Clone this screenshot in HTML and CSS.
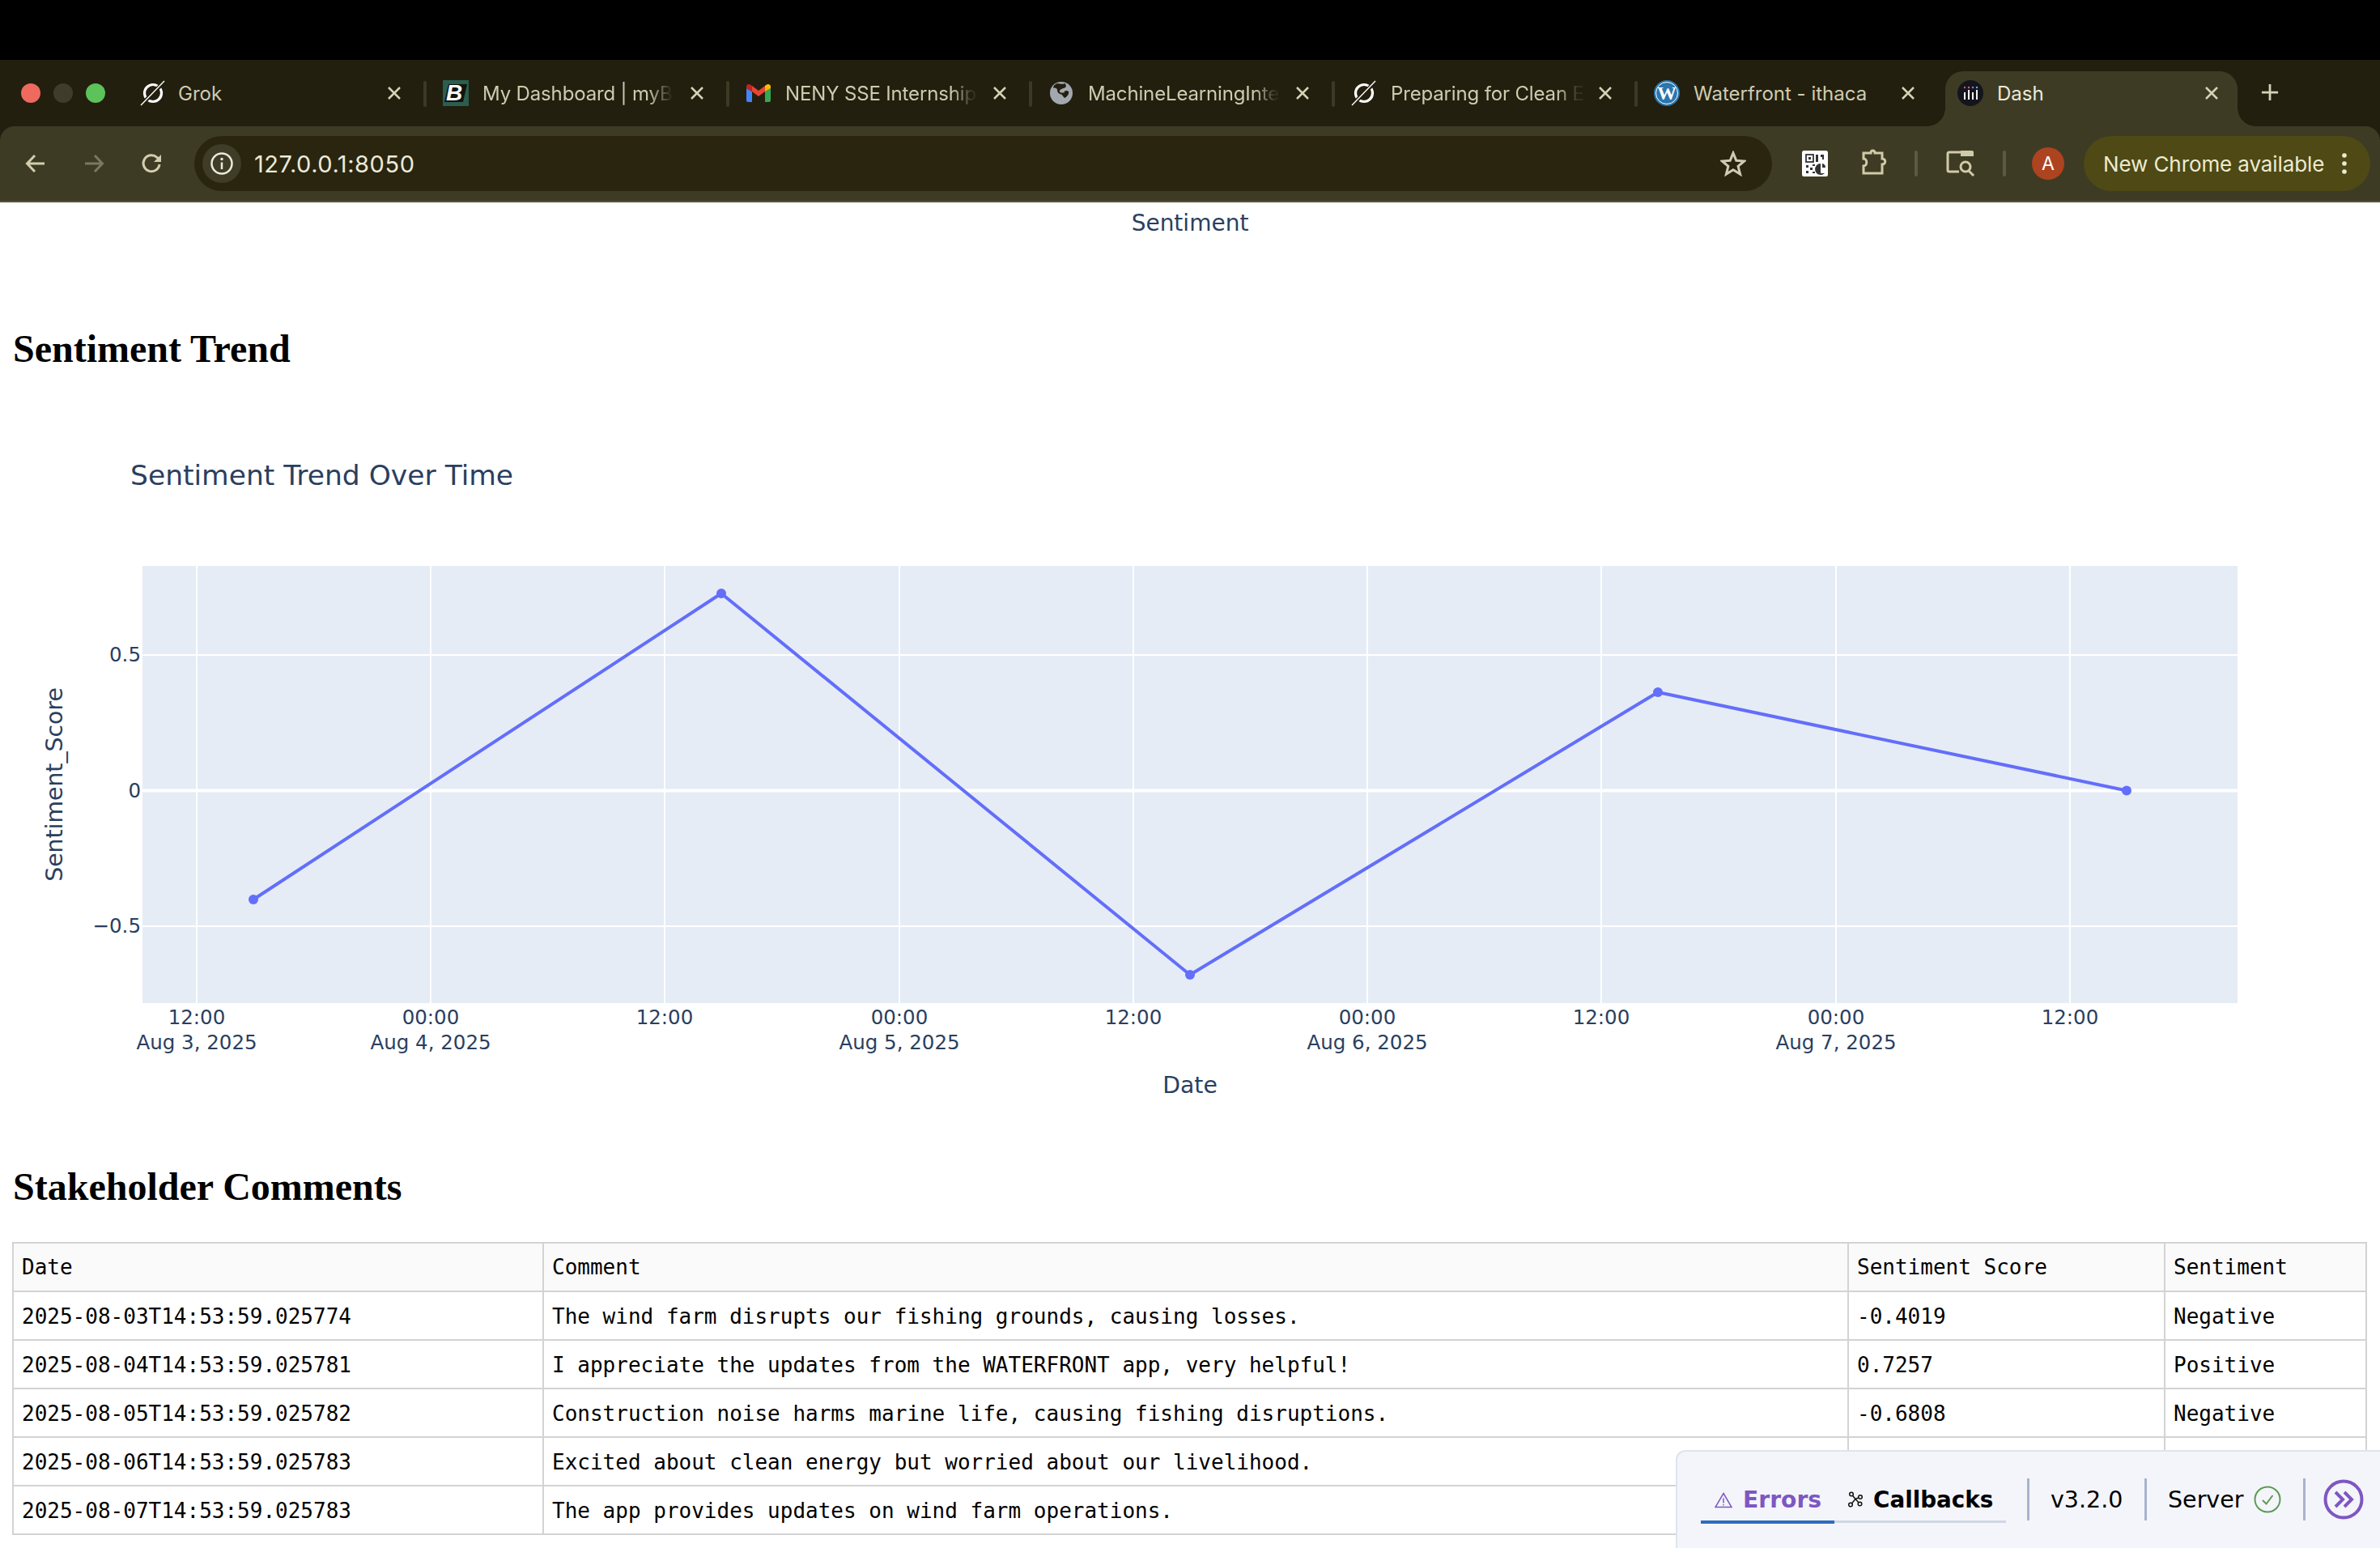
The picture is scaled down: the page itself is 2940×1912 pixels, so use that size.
FILE: index.html
```html
<!DOCTYPE html>
<html lang="en">
<head>
<meta charset="utf-8">
<title>Dash</title>
<link rel="stylesheet" href="styles.css">
</head>
<body>
<header class="chrome">
  <div class="menubar"></div>
  <div class="tabstrip">
    <div class="lights"><span class="light red"></span><span class="light grey"></span><span class="light green"></span></div>
    <div class="tab first-tab">
      <svg class="favicon" viewBox="0 0 32 32"><circle cx="16" cy="16" r="10.500" fill="none" stroke="#fff" stroke-width="3.200"/><path d="M1 31L31 1" stroke="#221f0f" stroke-width="5"/><path d="M1 31L30 1" stroke="#fff" stroke-width="1.400"/></svg>
      <span class="tab-title">Grok</span>
      <svg class="tab-close" viewBox="0 0 32 32"><path d="M9 9L23 23M23 9L9 23"/></svg>
    </div>
    <span class="tab-sep"></span>
    <div class="tab">
      <svg class="favicon" viewBox="0 0 32 32"><rect width="32" height="32" fill="#2b5e4e"/><path d="M7 5H30L25 27H2z" fill="#10140f"/><text class="fav-b" x="14" y="25" text-anchor="middle">B</text></svg>
      <span class="tab-title fade">My Dashboard | myB</span>
      <svg class="tab-close" viewBox="0 0 32 32"><path d="M9 9L23 23M23 9L9 23"/></svg>
    </div>
    <span class="tab-sep"></span>
    <div class="tab">
      <svg class="favicon" viewBox="-1 -5 32 32"><path d="M0 5V20a2 2 0 0 0 2 2H7V9z" fill="#4285f4"/><path d="M23 9V22h5a2 2 0 0 0 2-2V5z" fill="#34a853"/><path d="M7 9l8 6 8-6V2l-8 6-8-6z" fill="#ea4335"/><path d="M23 2V9l7-4V3C30 0 26.500-.5 25 .6z" fill="#fbbc04"/><path d="M0 5l7 4V2L5 .6C3.500-.5 0 0 0 3z" fill="#c5221f"/></svg>
      <span class="tab-title fade">NENY SSE Internship</span>
      <svg class="tab-close" viewBox="0 0 32 32"><path d="M9 9L23 23M23 9L9 23"/></svg>
    </div>
    <span class="tab-sep"></span>
    <div class="tab">
      <svg class="favicon" viewBox="0 0 32 32"><circle cx="16" cy="16" r="14" fill="#a3a8ae"/><path d="M11 4c4 1 8 1 10 0l1 4c-3 3-7 2-8 5s4 3 6 2c-1-2 3-3 5-1 1 3-2 7-5 8-2-2-3-5-6-5-2-1-3-3-3-5s-3-3-5-2c0-3 2-5 5-6z" fill="#221f0f"/></svg>
      <span class="tab-title fade">MachineLearningInte</span>
      <svg class="tab-close" viewBox="0 0 32 32"><path d="M9 9L23 23M23 9L9 23"/></svg>
    </div>
    <span class="tab-sep"></span>
    <div class="tab">
      <svg class="favicon" viewBox="0 0 32 32"><circle cx="16" cy="16" r="10.500" fill="none" stroke="#fff" stroke-width="3.200"/><path d="M1 31L31 1" stroke="#221f0f" stroke-width="5"/><path d="M1 31L30 1" stroke="#fff" stroke-width="1.400"/></svg>
      <span class="tab-title fade">Preparing for Clean E</span>
      <svg class="tab-close" viewBox="0 0 32 32"><path d="M9 9L23 23M23 9L9 23"/></svg>
    </div>
    <span class="tab-sep"></span>
    <div class="tab">
      <svg class="favicon" viewBox="0 0 32 32"><circle cx="16" cy="16" r="16" fill="#2a76ad"/><circle cx="16" cy="16" r="13.500" fill="none" stroke="#fff" stroke-width="1"/><text class="fav-w" x="16" y="24" text-anchor="middle">W</text></svg>
      <span class="tab-title">Waterfront - ithaca</span>
      <svg class="tab-close" viewBox="0 0 32 32"><path d="M9 9L23 23M23 9L9 23"/></svg>
    </div>
    <div class="tab active">
      <svg class="favicon" viewBox="0 0 32 32"><circle cx="16" cy="16" r="16" fill="#14151c"/><g fill="#f1f1f1"><rect x="8" y="15" width="2" height="9"/><rect x="13" y="12" width="2" height="12"/><rect x="18" y="15" width="2" height="9"/><rect x="23" y="12" width="2" height="12"/></g><g><circle cx="9" cy="9" r="1.200" fill="#e0447c"/><circle cx="14" cy="9" r="1.200" fill="#d45a9b"/><circle cx="19" cy="9" r="1.200" fill="#8f7fc9"/><circle cx="24" cy="9" r="1.200" fill="#5db8d8"/></g></svg>
      <span class="tab-title">Dash</span>
      <svg class="tab-close" viewBox="0 0 32 32"><path d="M9 9L23 23M23 9L9 23"/></svg>
    </div>
    <svg class="new-tab" viewBox="0 0 24 24"><path d="M12 1V23M1 12H23"/></svg>
  </div>
  <div class="toolbar">
    <button class="nav-btn"><svg viewBox="0 0 24 24" class="tool-icon"><path d="M23 12H2M11 2L1.500 12 11 22"/></svg></button>
    <button class="nav-btn dim"><svg viewBox="0 0 24 24" class="tool-icon"><path d="M1 12H22M13 2l9.500 10L13 22"/></svg></button>
    <button class="nav-btn"><svg viewBox="0 0 24 24" class="tool-icon"><path d="M21 13a10 10 0 1 1-3-8.500L21 7"/><path class="solid" d="M23 1v9H14z"/></svg></button>
    <div class="omnibox">
      <span class="site-info"><svg viewBox="0 0 28 28"><circle cx="14" cy="14" r="12.500" fill="none" stroke="#ece9dc" stroke-width="2.500"/><path d="M14 12.500V21" stroke="#ece9dc" stroke-width="2.500"/><circle cx="14" cy="8.500" r="1.700" fill="#ece9dc"/></svg></span>
      <span class="url">127.0.0.1:8050</span>
      <svg class="star" viewBox="0 0 32 32"><path d="M16 3l3.800 9.300 10 .7-7.700 6.400 2.500 9.700L16 23.800l-8.600 5.300 2.500-9.700L2.200 13l10-.7z"/></svg>
    </div>
    <svg class="qr" viewBox="0 0 32 32"><rect width="32" height="32" rx="2.500" fill="#fff"/><g fill="none" stroke="#333" stroke-width="1.800"><rect x="5" y="5" width="9" height="9"/></g><rect x="8" y="8" width="3" height="3" fill="#333"/><g fill="#333"><rect x="17" y="5" width="3" height="9"/><rect x="23" y="5" width="4" height="3"/><rect x="25" y="8" width="2" height="3"/><rect x="5" y="18" width="3" height="3"/><rect x="10" y="21" width="3" height="3"/><rect x="5" y="25" width="3" height="3"/><rect x="13" y="26" width="3" height="2"/><rect x="13" y="17" width="3" height="2"/></g><path d="M23 16a7 7 0 1 0 5 12h-5z" fill="#333"/><path d="M25 16a5 5 0 0 1 4 5h-4z" fill="#333"/></svg>
    <svg class="puzzle" viewBox="0 0 32 32"><path d="M3 5H12C12 1 17 1 17 5H26V12C31 12 31 19 26 19V30H3V21C8 21 8 12 3 12z"/></svg>
    <span class="tool-sep"></span>
    <svg class="side-search" viewBox="0 0 36 32"><path d="M16 26H4a2 2 0 0 1-2-2V4a2 2 0 0 1 2-2H20" fill="none" stroke="#cfcaa8" stroke-width="3"/><path d="M18 0H32a2 2 0 0 1 2 2V7H18z" fill="#cfcaa8"/><circle cx="24" cy="20" r="6" fill="none" stroke="#cfcaa8" stroke-width="3"/><path d="M28 25l6 6" stroke="#cfcaa8" stroke-width="3"/></svg>
    <span class="tool-sep second"></span>
    <span class="avatar">A</span>
    <div class="update-chip">
      <span>New Chrome available</span>
      <svg class="kebab" viewBox="0 0 8 28"><circle cx="4" cy="4" r="2.800"/><circle cx="4" cy="14" r="2.800"/><circle cx="4" cy="24" r="2.800"/></svg>
    </div>
  </div>
</header>

<main class="page">
  <div class="pie-title">Sentiment</div>
  <h2 class="section-title first">Sentiment Trend</h2>
  <svg class="trend-chart" viewBox="16 459 2908 941">
    <text class="chart-title" x="161" y="599">Sentiment Trend Over Time</text>
    <rect class="plot-bg" x="176" y="699" width="2588" height="540"/>
    <g class="grid">
      <path d="M243 699V1239M532 699V1239M821 699V1239M1111 699V1239M1400 699V1239M1689 699V1239M1978 699V1239M2268 699V1239M2557 699V1239"/>
      <path d="M176 809H2764M176 1144H2764"/>
    </g>
    <path class="zero" d="M176 976.500H2764"/>
    <path class="series" d="M313 1111L891 733L1470 1204L2048 855L2627 976.500"/>
    <g class="markers">
      <circle cx="313" cy="1111" r="6"/><circle cx="891" cy="733" r="6"/><circle cx="1470" cy="1204" r="6"/><circle cx="2048" cy="855" r="6"/><circle cx="2627" cy="976.500" r="6"/>
    </g>
    <g class="ytick">
      <text x="174" y="817">0.5</text><text x="174" y="985">0</text><text x="174" y="1152">−0.5</text>
    </g>
    <g class="xtick">
      <text x="243" y="1265">12:00</text><text x="243" y="1296">Aug 3, 2025</text>
      <text x="532" y="1265">00:00</text><text x="532" y="1296">Aug 4, 2025</text>
      <text x="821" y="1265">12:00</text>
      <text x="1111" y="1265">00:00</text><text x="1111" y="1296">Aug 5, 2025</text>
      <text x="1400" y="1265">12:00</text>
      <text x="1689" y="1265">00:00</text><text x="1689" y="1296">Aug 6, 2025</text>
      <text x="1978" y="1265">12:00</text>
      <text x="2268" y="1265">00:00</text><text x="2268" y="1296">Aug 7, 2025</text>
      <text x="2557" y="1265">12:00</text>
    </g>
    <text class="axis-title" x="1470" y="1350">Date</text>
    <text class="axis-title" transform="translate(77 969) rotate(-90)">Sentiment_Score</text>
  </svg>
  <h2 class="section-title">Stakeholder Comments</h2>
  <table class="comments">
    <colgroup><col class="c-date"><col class="c-comment"><col class="c-score"><col class="c-sent"></colgroup>
    <thead><tr><th>Date</th><th>Comment</th><th>Sentiment Score</th><th>Sentiment</th></tr></thead>
    <tbody>
      <tr><td>2025-08-03T14:53:59.025774</td><td>The wind farm disrupts our fishing grounds, causing losses.</td><td>-0.4019</td><td>Negative</td></tr>
      <tr><td>2025-08-04T14:53:59.025781</td><td>I appreciate the updates from the WATERFRONT app, very helpful!</td><td>0.7257</td><td>Positive</td></tr>
      <tr><td>2025-08-05T14:53:59.025782</td><td>Construction noise harms marine life, causing fishing disruptions.</td><td>-0.6808</td><td>Negative</td></tr>
      <tr><td>2025-08-06T14:53:59.025783</td><td>Excited about clean energy but worried about our livelihood.</td><td></td><td></td></tr>
      <tr><td>2025-08-07T14:53:59.025783</td><td>The app provides updates on wind farm operations.</td><td></td><td></td></tr>
    </tbody>
  </table>
</main>

<aside class="devtools">
  <div class="dev-tabs">
    <div class="dev-tab selected">
      <svg class="dev-warn" viewBox="0 0 22 20"><path d="M11 1.500L21 18.500H1z"/><path d="M11 7.500v6M11 15v1.500"/></svg>
      <span>Errors</span>
    </div>
    <div class="dev-tab">
      <svg class="dev-cb" viewBox="0 0 20 20"><g fill="none" stroke="#111" stroke-width="1.500"><path d="M5 3.500L10 9.500 16 7M10 9.500L15 15M10 9.500L4.500 16"/><circle cx="5" cy="3.500" r="2.300" fill="#f4f5fa"/><circle cx="16" cy="7" r="2.300" fill="#f4f5fa"/><circle cx="15.500" cy="15.500" r="2.300" fill="#f4f5fa"/><circle cx="4" cy="16.500" r="2.300" fill="#f4f5fa"/></g></svg>
      <span>Callbacks</span>
    </div>
  </div>
  <span class="dev-sep"></span>
  <span class="dev-version">v3.2.0</span>
  <span class="dev-sep"></span>
  <span class="dev-server">Server</span>
  <svg class="dev-ok" viewBox="0 0 34 34"><circle cx="17" cy="17" r="15.500"/><path d="M11 18l4.500 4.500L23.500 12"/></svg>
  <span class="dev-sep"></span>
  <svg class="dev-toggle" viewBox="0 0 50 50"><circle cx="25" cy="25" r="22.500"/><path d="M15 16l9 9-9 9M26 16l9 9-9 9"/></svg>
</aside>
</body>
</html>
```

FILE: styles.css
```css
* { box-sizing: border-box; }
html, body { margin: 0; padding: 0; }
body { width: 2940px; height: 1912px; overflow: hidden; position: relative; background: #fff; font-family: "Liberation Serif", serif; }

.chrome { background: #221f0f; font-family: Inter, "Noto Sans", sans-serif; }
.menubar { height: 74px; background: #000; }

.tabstrip { height: 82px; display: flex; align-items: flex-start; padding-left: 153px; position: relative; }
.lights { position: absolute; left: 26px; top: 29px; display: flex; gap: 16px; }
.light { width: 24px; height: 24px; border-radius: 50%; }
.light.red { background: #ee6a5f; }
.light.grey { background: #3e3d2d; }
.light.green { background: #5cc25a; }

.tab { width: 370px; height: 68px; margin-top: 14px; padding: 0 20px 14px; display: flex; align-items: center; color: #cfcbaf; font-size: 24px; }
.favicon { width: 32px; height: 32px; flex: none; margin-right: 17px; }
.first-tab .favicon { margin-right: 15px; }
.fav-b { font-family: "Liberation Sans", sans-serif; font-weight: 700; font-style: italic; font-size: 28px; fill: #fff; }
.fav-w { font-family: "Liberation Serif", serif; font-weight: 700; font-size: 24px; fill: #fff; }
.tab-title { flex: 1; min-width: 0; overflow: hidden; white-space: nowrap; }
.tab-title.fade { letter-spacing: -.15px; -webkit-mask-image: linear-gradient(90deg, #000 calc(100% - 34px), rgba(0,0,0,.1) calc(100% - 8px)); mask-image: linear-gradient(90deg, #000 calc(100% - 34px), rgba(0,0,0,.1) calc(100% - 8px)); }
.tab-close { width: 32px; height: 32px; flex: none; margin-left: 10px; }
.tab-close path { stroke: #d6d2b6; stroke-width: 2.500; fill: none; }
.tab-sep { width: 4px; height: 32px; margin-top: 26px; background: #3c3a25; border-radius: 2px; flex: none; }

.tab.active { width: 361px; margin-left: 10px; padding: 0 16px 14px 15px; background: #3e3b24; border-radius: 22px 22px 0 0; color: #ecead8; position: relative; }
.tab.active::before, .tab.active::after { content: ""; position: absolute; bottom: 0; width: 22px; height: 22px; }
.tab.active::before { left: -22px; background: radial-gradient(circle at 0 0, transparent 21.500px, #3e3b24 22px); }
.tab.active::after { right: -22px; background: radial-gradient(circle at 100% 0, transparent 21.500px, #3e3b24 22px); }
.new-tab { width: 22px; height: 22px; margin: 29px 0 0 29px; }
.new-tab path { stroke: #d6d2b6; stroke-width: 3; fill: none; }

.toolbar { height: 94px; display: flex; align-items: flex-start; padding: 12px 12px 0 20px; background: #3e3b24; border-bottom: 2px solid #55533f; border-radius: 18px 18px 0 0; }
.nav-btn { width: 48px; height: 68px; margin-right: 24px; padding: 0; border: 0; background: none; display: flex; align-items: center; justify-content: center; color: #d2cdae; }
.nav-btn.dim { color: #7a7862; }
.nav-btn:nth-child(3) { margin-right: 28px; }
.tool-icon { width: 24px; height: 24px; fill: none; stroke: currentColor; stroke-width: 3; overflow: visible; }
.tool-icon .solid { fill: currentColor; stroke: none; }

.omnibox { flex: 1; height: 68px; border-radius: 34px; background: #29250f; display: flex; align-items: center; padding: 0 32px 0 10px; }
.site-info { width: 48px; height: 48px; border-radius: 50%; background: #3f3c27; display: flex; align-items: center; justify-content: center; flex: none; }
.site-info svg { width: 28px; height: 28px; }
.url { flex: 1; margin-left: 16px; color: #ece9dc; font-size: 29px; letter-spacing: .55px; }
.star { width: 32px; height: 32px; fill: none; stroke: #cfcbb4; stroke-width: 3; }

.qr { width: 32px; height: 32px; margin: 18px 0 0 37px; flex: none; }
.puzzle { width: 32px; height: 32px; margin: 16px 0 0 41px; flex: none; fill: none; stroke: #cfcaa8; stroke-width: 3; overflow: visible; }
.tool-sep { width: 4px; height: 32px; margin: 18px 0 0 34px; background: #5c5a44; border-radius: 2px; flex: none; }
.side-search { width: 36px; height: 32px; margin: 18px 0 0 35px; flex: none; overflow: visible; }
.tool-sep.second { margin-left: 34px; }
.avatar { width: 40px; height: 40px; margin: 14px 0 0 32px; border-radius: 50%; background: #ae4320; color: #fff; font-size: 23px; display: flex; align-items: center; justify-content: center; flex: none; }
.update-chip { width: 354px; height: 68px; margin-left: 24px; border-radius: 34px; background: #4e4915; color: #ecebcf; font-size: 26px; letter-spacing: -.1px; display: flex; align-items: center; padding: 0 28px 0 24px; justify-content: space-between; flex: none; }
.kebab { width: 8px; height: 28px; fill: #ecebcf; }

.page { padding: 0 16px; }
.pie-title { height: 48px; line-height: 48px; padding-top: 2px; margin: 0 -16px; text-align: center; font-family: "DejaVu Sans", sans-serif; font-size: 28px; color: #2a3f5f; }
.section-title { margin: 0; font-size: 48px; line-height: 56px; font-weight: 700; color: #000; font-family: "Liberation Serif", serif; }
.section-title.first { margin-top: 105px; }

.trend-chart { display: block; width: 2908px; height: 941px; margin-bottom: 38px; font-family: "DejaVu Sans", sans-serif; fill: #2a3f5f; }
.chart-title { font-size: 34.500px; }
.plot-bg { fill: #e5ecf6; }
.grid path { stroke: #fff; stroke-width: 2; fill: none; }
.zero { stroke: #fff; stroke-width: 4; fill: none; }
.series { stroke: #636efa; stroke-width: 4; fill: none; stroke-linejoin: round; }
.markers circle { fill: #636efa; }
.ytick text { font-size: 24.500px; text-anchor: end; }
.xtick text { font-size: 24.500px; text-anchor: middle; }
.axis-title { font-size: 28.300px; text-anchor: middle; }

.comments { width: 2907px; margin: 40px 0 0 -1px; border-collapse: collapse; table-layout: fixed; font-family: "DejaVu Sans Mono", "Liberation Mono", monospace; font-size: 26px; color: #000; }
.c-date { width: 655px; }
.c-comment { width: 1612px; }
.c-score { width: 391px; }
.c-sent { width: 249px; }
.comments th, .comments td { height: 60px; padding: 0 10px; border: 2px solid #d3d3d3; text-align: left; font-weight: 400; white-space: nowrap; overflow: hidden; }
.comments td { padding-top: 2px; }
.comments th { background: #fafafa; }

.devtools { position: absolute; left: 2070px; top: 1791px; width: 870px; height: 121px; padding: 33px 0 0 29px; background: #f4f5fa; border: solid #dfe3ec; border-width: 2px 0 0 2px; border-top-left-radius: 12px; display: flex; align-items: flex-start; font-family: "DejaVu Sans", sans-serif; font-size: 28.500px; color: #000; }
.dev-tabs { display: flex; width: 377px; height: 55px; border-bottom: 3px solid #d0d6e4; flex: none; }
.dev-tab { height: 56px; display: flex; align-items: flex-start; padding-top: 10px; font-size: 27.800px; font-weight: 700; line-height: 34px; }
.dev-tab.selected { width: 165px; padding-left: 17px; color: #7e57c2; border-bottom: 4px solid #2d6dbc; font-size: 28.200px; }
.dev-warn { width: 22px; height: 20px; margin: 7px 13px 0 0; fill: none; stroke: #7e57c2; stroke-width: 1.500; flex: none; }
.dev-tab:not(.selected) { padding-left: 16px; }
.dev-cb { width: 20px; height: 20px; margin: 6px 12px 0 0; flex: none; }
.dev-sep { width: 3px; height: 52px; background: #a9b3cf; flex: none; margin-left: 26px; }
.dev-version { width: 119px; margin-left: 26px; padding-top: 1px; line-height: 52px; margin-right: -3px; flex: none; }
.dev-version + .dev-sep { margin-left: 0; }
.dev-server { margin-left: 26px; padding-top: 1px; line-height: 52px; flex: none; }
.dev-ok { width: 34px; height: 34px; margin: 9px 0 0 13px; fill: none; stroke: #5d9a55; stroke-width: 2; flex: none; }
.dev-ok + .dev-sep { margin-left: 27px; }
.dev-toggle { width: 50px; height: 50px; margin: 1px 0 0 22px; fill: none; stroke: #7e57c2; stroke-width: 4; flex: none; }
```
